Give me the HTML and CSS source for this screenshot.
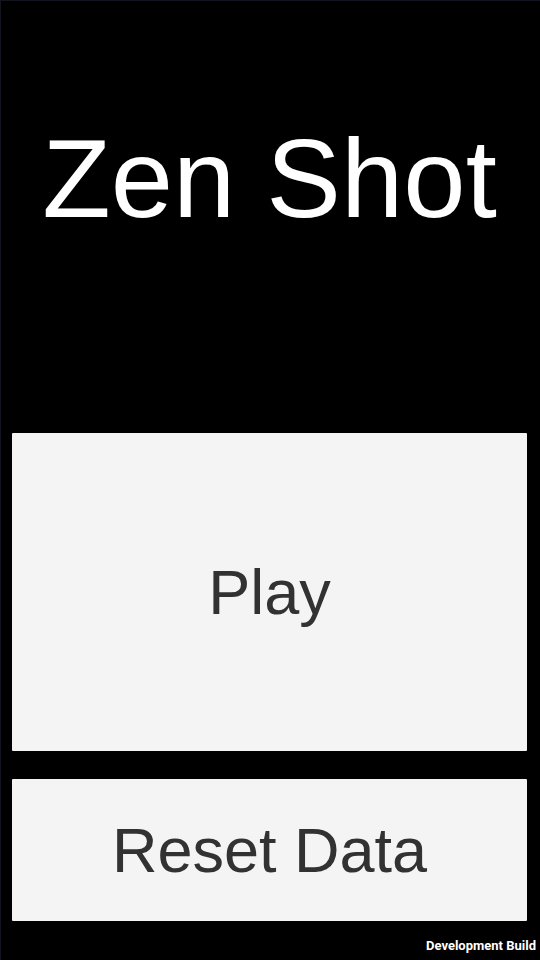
FILE: index.html
```html
<!DOCTYPE html>
<html lang="en">
<head>
    <meta charset="UTF-8">
    <meta name="viewport" content="width=device-width, initial-scale=1.0">
    <title>Zen Shot</title>
    <link rel="stylesheet" href="styles.css">
</head>
<body>
    <div class="screen">
        <div class="title-area">
            <h1 class="title">Zen Shot</h1>
        </div>
        <div class="menu">
            <button class="menu-button play-button">Play</button>
            <button class="menu-button reset-button">Reset Data</button>
        </div>
        <div class="dev-build">Development Build</div>
    </div>
</body>
</html>
```

FILE: styles.css
```css
body {
    margin: 0;
    padding: 0;
    background: #000;
    font-family: "Liberation Sans", Arial, sans-serif;
}

.screen {
    position: relative;
    width: 540px;
    height: 960px;
    box-sizing: border-box;
    border-left: 1px solid #12141f;
    border-top: 1px solid #12141f;
    background: #000;
    display: flex;
    flex-direction: column;
    padding: 0 13px 0 11px;
}

.title-area {
    height: 432px;
}

.title {
    margin: 122px 0 0;
    color: #fff;
    font-size: 112px;
    font-weight: normal;
    line-height: 1;
    text-align: center;
}

.menu {
    display: flex;
    flex-direction: column;
    gap: 28px;
}

.menu-button {
    border: none;
    border-radius: 1px;
    background: #f4f4f4;
    color: #323232;
    font-family: "Liberation Sans", Arial, sans-serif;
    font-size: 63px;
    padding: 0;
    width: 100%;
    cursor: pointer;
}

.play-button {
    height: 318px;
}

.reset-button {
    height: 142px;
}

.dev-build {
    position: absolute;
    right: 4px;
    bottom: 7px;
    color: #fff;
    font-family: Roboto, "Liberation Sans", sans-serif;
    font-weight: bold;
    font-size: 13px;
}
```
